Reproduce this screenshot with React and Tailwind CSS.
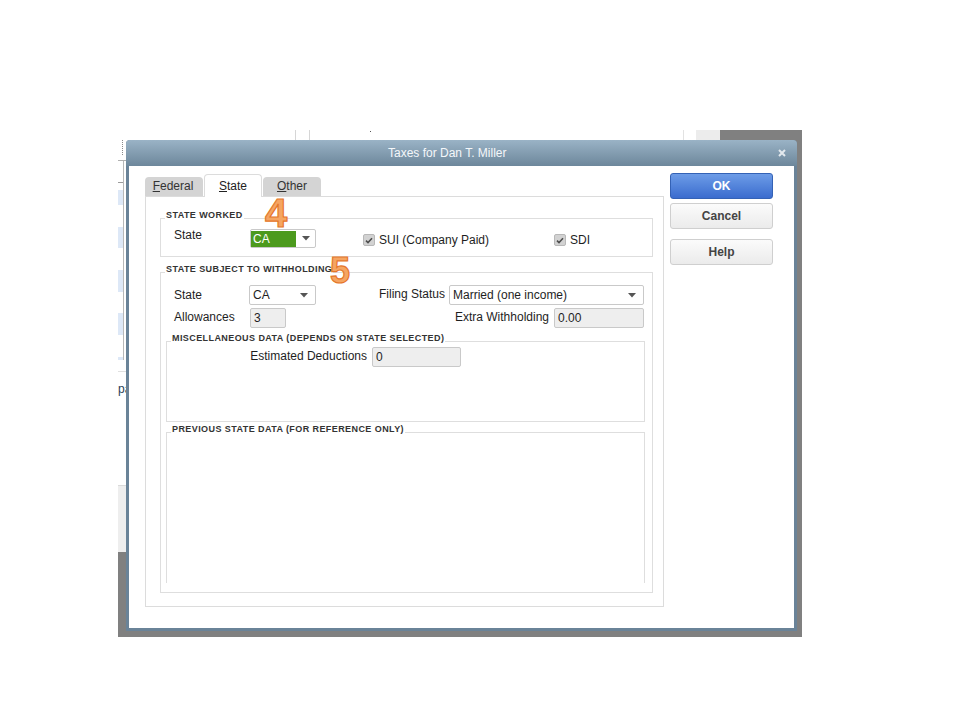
import React from "react";

const Arrow = () => (
  <svg width="8" height="5" viewBox="0 0 8 5">
    <path d="M0 0H8L4 4.5Z" fill="#555" />
  </svg>
);

const Check = () => (
  <div className="w-[12px] h-[12px] rounded-[2px] bg-[#d2d2d2] border border-[#b8b8b8] flex items-center justify-center">
    <svg width="8" height="7" viewBox="0 0 8 7">
      <path d="M1 3.6L3 5.6L7 1.2" stroke="#4c4c4c" strokeWidth="1.5" fill="none" />
    </svg>
  </div>
);

const Legend = ({ children }) => (
  <span className="absolute -top-[9px] left-[4px] px-[1px] bg-white text-[9px] leading-[11px] font-bold tracking-[0.42px] text-[#333] whitespace-nowrap">
    {children}
  </span>
);

const Btn = ({ children, primary, className }) => (
  <div
    className={
      (primary
        ? "border-[#3462b5] bg-gradient-to-b from-[#6d9ce7] to-[#3b6cce] text-white "
        : "border-[#cfcfcf] bg-gradient-to-b from-[#fbfbfb] to-[#ebebeb] text-[#444] ") +
      "w-[103px] h-[26px] rounded-[3px] border flex items-center justify-center text-[12px] font-bold " +
      (className || "")
    }
  >
    {children}
  </div>
);

export default function App() {
  return (
    <div className="relative w-[960px] h-[720px] bg-white overflow-hidden pt-[130px] pl-[118px] font-['Liberation_Sans',Arial,sans-serif] text-[12px] text-[#1e1e1e]">
      {/* underlying app screenshot */}
      <div className="relative flex w-[684px] h-[507px]">
        <div className="w-[602px] flex flex-col">
          <div className="h-[422px] flex">
            {/* left strip */}
            <div className="w-[8px] flex flex-col overflow-hidden">
              <div className="h-[10px]" />
              <div className="h-[15px] ml-[4px] border-l border-dotted border-[#8a8a8a]" />
              <div className="h-[5px]" />
              <div className="h-px bg-[#b0b0b0]" />
              <div className="h-[199px] flex">
                <div className="w-[5px] flex flex-col">
                  <div className="h-[21px]" />
                  <div className="h-px bg-[#9c9c9c]" />
                  <div className="h-[7px]" />
                  <div className="h-[15px] bg-[#dde8f7]" />
                  <div className="h-[22px]" />
                  <div className="h-[21px] bg-[#dde8f7]" />
                  <div className="h-[22px]" />
                  <div className="h-[22px] bg-[#dde8f7]" />
                  <div className="h-[21px]" />
                  <div className="h-[22px] bg-[#dde8f7]" />
                  <div className="h-[22px]" />
                  <div className="h-[3px] bg-[#dde8f7]" />
                </div>
                <div className="w-px bg-[#b8b8b8]" />
                <div className="flex-1" />
              </div>
              <div className="h-[11px]" />
              <div className="h-px bg-[#e0e0e0]" />
              <div className="h-[10px]" />
              <div className="h-[14px] leading-[14px] text-[12px] text-[#2a3f5a] whitespace-nowrap">pa</div>
              <div className="flex-1" />
              <div className="h-[67px] bg-[#eeeeee] border-t border-[#dadada]" />
            </div>
            {/* rest of window */}
            <div className="flex-1 flex flex-col">
              <div className="h-[10px] flex">
                <div className="w-[169px]" />
                <div className="w-px bg-[#d6d6d6]" />
                <div className="w-[13px]" />
                <div className="w-px bg-[#d6d6d6]" />
                <div className="w-[60px]" />
                <div className="w-px h-px mt-[1px] bg-[#555]" />
                <div className="w-[312px]" />
                <div className="w-px bg-[#e2e2e2]" />
                <div className="w-[12px]" />
                <div className="w-[24px] bg-[#ececec]" />
              </div>
            </div>
          </div>
          <div className="flex-1 bg-[#808080]" />
        </div>
        <div className="w-[82px] bg-[#808080]" />

        {/* dialog */}
        <div className="absolute left-[8px] top-[10px] w-[671px] h-[491px] flex flex-col rounded-t-[4px] bg-[#6a8398]">
          <div className="h-[26px] flex items-center rounded-t-[4px] bg-gradient-to-b from-[#9ab3c6] to-[#6d879b]">
            <span className="ml-[262px] text-[12px] text-[#f4f7fa]">Taxes for Dan T. Miller</span>
            <svg className="ml-auto mr-[11px]" width="8" height="8" viewBox="0 0 8 8">
              <path d="M1 1L7 7M7 1L1 7" stroke="#e3e9ee" strokeWidth="2" />
            </svg>
          </div>
          <div className="flex-1 mx-[3px] mb-[3px] bg-white flex items-start pl-[16px] pt-[7px]">
            {/* left tab column */}
            <div className="mt-[1px] w-[519px] flex flex-col">
              <div className="h-[23px] flex items-end gap-[1px]">
                <div className="w-[58px] h-[20px] rounded-t-[4px] bg-[#d4d4d4] text-[#333] flex justify-center pt-[2px] pr-[2px] leading-[14px]">
                  <span><span className="underline">F</span>ederal</span>
                </div>
                <div className="relative z-10 w-[58px] h-[23px] rounded-t-[4px] bg-white border border-b-0 border-[#dcdcdc] text-[#222] flex justify-center pt-[4px] leading-[14px]">
                  <span><span className="underline">S</span>tate</span>
                </div>
                <div className="w-[58px] h-[20px] rounded-t-[4px] bg-[#d4d4d4] text-[#333] flex justify-center pt-[2px] leading-[14px]">
                  <span><span className="underline">O</span>ther</span>
                </div>
              </div>
              <div className="-mt-[1px] h-[411px] border border-[#dcdcdc] pl-[14px] flex flex-col">
                {/* STATE WORKED */}
                <div className="relative mt-[21px] w-[493px] h-[39px] border border-[#dedede] flex items-start pt-[10px] pl-[13px]">
                  <Legend>STATE WORKED</Legend>
                  <div className="w-[76px] -mt-[1px] leading-[14px]">State</div>
                  <div className="w-[66px] h-[19px] flex items-center border border-[#c9c9c9] rounded-[2px] bg-white">
                    <div className="w-[45px] h-[16px] bg-[#4c9a1d] text-white pl-[2px] leading-[16px]">CA</div>
                    <div className="flex-1 flex justify-center">
                      <Arrow />
                    </div>
                  </div>
                  <div className="w-[47px]" />
                  <div className="w-[191px] flex items-start">
                    <div className="mt-[5px]">
                      <Check />
                    </div>
                    <span className="ml-[4px] mt-[4px] leading-[14px]">SUI (Company Paid)</span>
                  </div>
                  <div className="mt-[5px]">
                    <Check />
                  </div>
                  <span className="ml-[4px] mt-[4px] leading-[14px]">SDI</span>
                </div>

                {/* STATE SUBJECT TO WITHHOLDING */}
                <div className="relative mt-[15px] w-[493px] h-[321px] border border-[#dedede] flex flex-col pt-[12px]">
                  <Legend>STATE SUBJECT TO WITHHOLDING</Legend>
                  <div className="pl-[13px] h-[20px] flex items-center">
                    <div className="w-[75px] leading-[14px]">State</div>
                    <div className="w-[67px] h-[20px] flex items-center border border-[#c9c9c9] rounded-[2px] bg-white">
                      <div className="flex-1 pl-[3px]">CA</div>
                      <div className="w-[22px] flex justify-center">
                        <Arrow />
                      </div>
                    </div>
                    <div className="w-[133px] text-right pr-[4px] leading-[14px] -mt-[2px]">Filing Status</div>
                    <div className="w-[195px] h-[20px] flex items-center border border-[#c9c9c9] rounded-[2px] bg-white">
                      <div className="flex-1 pl-[3px]">Married (one income)</div>
                      <div className="w-[22px] flex justify-center">
                        <Arrow />
                      </div>
                    </div>
                  </div>
                  <div className="mt-[3px] pl-[13px] h-[20px] flex items-center">
                    <div className="w-[76px] leading-[14px] -mt-[2px]">Allowances</div>
                    <div className="w-[36px] h-[20px] bg-[#eeeeee] border border-[#c9c9c9] rounded-[2px] pl-[3px] flex items-center">3</div>
                    <div className="w-[268px] text-right pr-[5px] leading-[14px] -mt-[2px]">Extra Withholding</div>
                    <div className="w-[90px] h-[20px] bg-[#eeeeee] border border-[#c9c9c9] rounded-[2px] pl-[3px] flex items-center">0.00</div>
                  </div>

                  <div className="relative mt-[13px] ml-[5px] w-[479px] h-[81px] border border-[#dedede] pt-[5px] flex items-start">
                    <Legend>MISCELLANEOUS DATA (DEPENDS ON STATE SELECTED)</Legend>
                    <div className="w-[205px] h-[20px] flex items-center justify-end pr-[5px]">
                      <span className="leading-[14px] -mt-[2px]">Estimated Deductions</span>
                    </div>
                    <div className="w-[89px] h-[20px] bg-[#eeeeee] border border-[#c9c9c9] rounded-[2px] pl-[3px] flex items-center">0</div>
                  </div>

                  <div className="relative mt-[10px] ml-[5px] w-[479px] h-[151px] border border-b-0 border-[#dedede]">
                    <Legend>PREVIOUS STATE DATA (FOR REFERENCE ONLY)</Legend>
                  </div>
                </div>
              </div>
            </div>

            {/* buttons */}
            <div className="ml-[6px] flex flex-col">
              <Btn primary>OK</Btn>
              <Btn className="mt-[4px]">Cancel</Btn>
              <Btn className="mt-[10px]">Help</Btn>
            </div>
          </div>
        </div>
      </div>

      {/* annotations */}
      <span className="absolute left-[265px] top-[198px] text-[40px] leading-[30px] font-bold text-[#f5a562] [-webkit-text-stroke:1.2px_#e5772b]">
        4
      </span>
      <span className="absolute left-[330px] top-[258px] text-[36px] leading-[26px] font-bold text-[#f5a562] [-webkit-text-stroke:1.2px_#e5772b]">
        5
      </span>
    </div>
  );
}
